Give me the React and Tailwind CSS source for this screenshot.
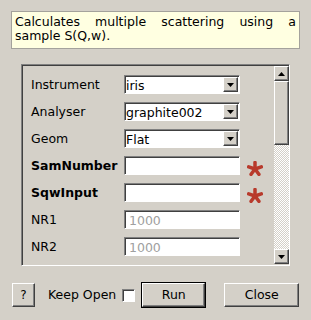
import React from 'react';

const raised =
  'border border-t-white border-l-white border-r-[#404040] border-b-[#404040] shadow-[inset_-1px_-1px_0_#808080] bg-[#d4d0c8]';
const sunken =
  'border border-t-[#808080] border-l-[#808080] border-r-white border-b-white shadow-[inset_1px_1px_0_#404040]';

const rows = [
  { label: 'Instrument', type: 'combo', value: 'iris' },
  { label: 'Analyser', type: 'combo', value: 'graphite002' },
  { label: 'Geom', type: 'combo', value: 'Flat' },
  { label: 'SamNumber', type: 'edit', bold: true, required: true },
  { label: 'SqwInput', type: 'edit', bold: true, required: true },
  { label: 'NR1', type: 'edit', placeholder: '1000' },
  { label: 'NR2', type: 'edit', placeholder: '1000' },
  { label: '', type: 'edit', placeholder: '' },
];

const Arrow = ({ down }) => (
  <svg width="7" height="4" viewBox="0 0 7 4">
    {down ? <polygon points="0,0 7,0 3.5,4" fill="#000" /> : <polygon points="0,4 7,4 3.5,0" fill="#000" />}
  </svg>
);

const Asterisk = () => (
  <svg width="16" height="15" viewBox="0 0 16 15">
    <g stroke="#b83a2c" strokeWidth="3.5" strokeLinecap="round">
      <line x1="8" y1="8" x2="8" y2="1.5" />
      <line x1="8" y1="8" x2="14.3" y2="5.9" />
      <line x1="8" y1="8" x2="11.9" y2="13.3" />
      <line x1="8" y1="8" x2="4.1" y2="13.3" />
      <line x1="8" y1="8" x2="1.7" y2="5.9" />
    </g>
  </svg>
);

const Field = ({ row }) => {
  if (row.type === 'combo') {
    return (
      <div className={`${sunken} w-[116px] h-[19px] bg-white flex items-center pl-[1px] pr-[1px]`}>
        <span className="flex-1 leading-none mt-[3px]">{row.value}</span>
        <div className={`${raised} w-[15px] h-[15px] flex items-center justify-center`}>
          <Arrow down />
        </div>
      </div>
    );
  }
  return (
    <div className={`${sunken} w-[116px] h-[19px] bg-white flex items-center pl-[4px]`}>
      <span className="text-[#a0a0a0] leading-none mt-[3px]">{row.placeholder}</span>
    </div>
  );
};

export default function App() {
  return (
    <div className="w-[311px] h-[320px] bg-[#d4d0c8] font-['DejaVu_Sans',sans-serif] text-[12.5px] text-black overflow-hidden">
      <div className="pt-[11px] px-[11px]">
        <div className="h-[38px] bg-[#ffffe1] border border-[#a4a29c] px-[3px] pt-[3px] leading-[14px] text-justify">
          Calculates multiple scattering using a sample S(Q,w).
        </div>

        <div className="ml-[10px] mt-[15px] w-[269px] h-[202px] flex border border-t-[#808080] border-l-[#808080] border-r-white border-b-white">
          <div className="flex-1 flex border-t border-l border-[#404040]">
            <div className="flex-1 h-[198px] overflow-hidden pt-[9px] pl-[8px] flex flex-col gap-[8px]">
              {rows.map((row, i) => (
                <div key={i} className="flex items-center h-[19px] shrink-0">
                  <span className={`w-[93px] mt-[2px] ${row.bold ? 'font-bold' : ''}`}>{row.label}</span>
                  <Field row={row} />
                  {row.required && (
                    <div className="ml-[7px] mt-[5px]">
                      <Asterisk />
                    </div>
                  )}
                </div>
              ))}
            </div>
            <div className="w-[15px] h-[198px] flex flex-col">
              <div className={`${raised} h-[15px] flex items-center justify-center`}>
                <Arrow />
              </div>
              <div className={`${raised} h-[64px]`} />
              <div className="flex-1 bg-[repeating-conic-gradient(#ffffff_0%_25%,#d4d0c8_0%_50%)] bg-[length:2px_2px]" />
              <div className={`${raised} h-[15px] flex items-center justify-center`}>
                <Arrow down />
              </div>
            </div>
          </div>
        </div>
      </div>

      <div className="mt-[16px] pl-[12px] flex items-center">
        <button className={`${raised} w-[23px] h-[24px] text-[12px] flex items-center justify-center`}>?</button>
        <span className="ml-[13px] leading-none">Keep Open</span>
        <div className={`${sunken} ml-[6px] w-[13px] h-[13px] bg-white`} />
        <div className="ml-[6px] w-[65px] h-[26px] border border-black">
          <button className={`${raised} w-full h-full flex items-center justify-center`}>Run</button>
        </div>
        <button className={`${raised} ml-[18px] w-[75px] h-[24px] flex items-center justify-center`}>Close</button>
      </div>
    </div>
  );
}
